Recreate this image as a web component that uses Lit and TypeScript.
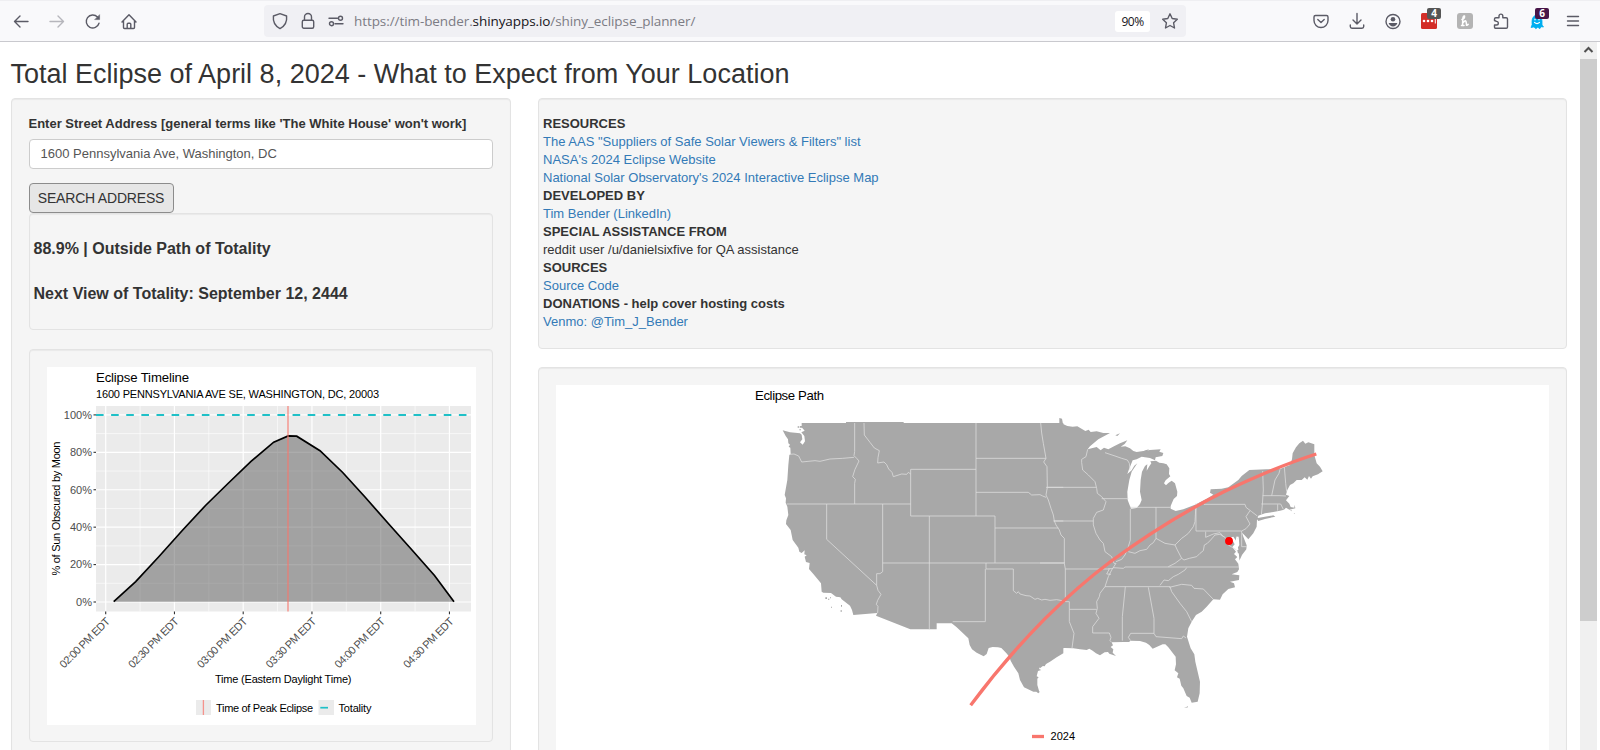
import { LitElement, html, svg, css } from "lit";
import { customElement } from "lit/decorators.js";

@customElement("browser-bar")
class BrowserBar extends LitElement {
  static styles = css`
    :host { display: flex; box-sizing: border-box; height: 42px; align-items: center; background: #f9f9fb; border-top: 1px solid #efeff2; border-bottom: 1px solid #c9c9ce; padding: 0 19px 0 13px; font-family: "Open Sans", "Noto Sans", sans-serif; }
    svg { display: block; overflow: visible; fill: none; stroke: #5b5b66; stroke-width: 1.4; stroke-linecap: round; stroke-linejoin: round; }
    .nav { display: flex; gap: 20px; width: 251px; }
    .dim { opacity: .42; }
    .url { display: flex; align-items: center; box-sizing: border-box; width: 922px; height: 32px; border-radius: 4px; background: #f0f0f4; padding: 0 8px; }
    .marks { display: flex; gap: 12px; margin-right: 10px; }
    .addr { flex: 1; font-size: 13.5px; line-height: 20px; color: #7c7c84; white-space: nowrap; letter-spacing: -.08px; }
    .addr b { font-weight: 400; color: #15141a; }
    .zoom { width: 35px; height: 21px; line-height: 21px; text-align: center; font-size: 12px; letter-spacing: -.5px; color: #15141a; background: #fff; border-radius: 3px; margin-right: 12px; }
    .tools { display: flex; gap: 20px; margin-left: auto; }
    .item { position: relative; width: 16px; height: 16px; }
    .badge { position: absolute; left: 6px; top: -13px; width: 14px; height: 11px; border-radius: 2px; color: #fff; font-size: 10px; line-height: 11px; font-weight: 700; text-align: center; background: #555; }
    .plum { background: #471548; }
  `;
  icon(d: unknown) { return html`<svg width="16" height="16" viewBox="0 0 16 16">${d}</svg>`; }
  render() {
    return html`
      <div class="nav">
        ${this.icon(svg`<path d="M15 8.5H1.5M7 3 1.5 8.5 7 14"/>`)}
        <span class="dim">${this.icon(svg`<path d="M1 8.5h13.500M9 3l5.500 5.500L9 14"/>`)}</span>
        ${this.icon(svg`<path d="M14 10.200A6.500 6.500 0 1 1 12.500 4"/><path d="M14.600 2v4.600H10z" fill="#5b5b66" stroke-width=".5"/>`)}
        ${this.icon(svg`<path d="M1 9 8 1.700 15 9M2.500 8v6.500q0 1 1 1h9q1 0 1-1V8M6.200 15.200v-4q0-1 1-1h1.600q1 0 1 1v4"/>`)}
      </div>
      <div class="url">
        <div class="marks">
          ${this.icon(svg`<path d="M8 .7 14.600 3c.6 5.500-1.600 10-6.600 12.600C3 13 .8 8.500 1.400 3z"/>`)}
          ${this.icon(svg`<rect x="2.300" y="7.200" width="11.400" height="8" rx="1.500"/><path d="M4.500 7V4a3.500 3.500 0 0 1 7 0v3"/>`)}
          ${this.icon(svg`<path d="M1 5.300h8.500M7 10.700h8"/><circle cx="12.500" cy="5.300" r="2"/><circle cx="3.500" cy="10.700" r="2"/>`)}
        </div>
        <div class="addr">https://tim-bender.<b>shinyapps.io</b>/shiny_eclipse_planner/</div>
        <div class="zoom">90%</div>
        ${this.icon(svg`<path d="m8 .8 2.200 4.700 5.100.7-3.700 3.600.9 5.200L8 12.500 3.500 15l.9-5.200L.7 6.200l5.100-.7z"/>`)}
      </div>
      <div class="tools">
        ${this.icon(svg`<path d="M2.500 2.500h11q1.500 0 1.500 1.500v3.500a7 7 0 0 1-14 0V4q0-1.500 1.500-1.500zM4.800 6.500 8 9.500l3.200-3"/>`)}
        ${this.icon(svg`<path d="M8 .5v10.500M4 7l4 4 4-4M1.300 12v1.500q0 1.700 1.700 1.700h10q1.700 0 1.700-1.700V12"/>`)}
        ${this.icon(svg`<circle cx="8" cy="8.500" r="7"/><circle cx="8" cy="6.300" r="2.300" fill="#5b5b66" stroke="none"/><path d="M3.600 10h8.800q-1.200 3.400-4.400 3.400T3.600 10z" fill="#5b5b66" stroke="none"/>`)}
        <div class="item">${this.icon(svg`<rect x="0" y="0" width="16" height="16" rx="1.500" fill="#d32d27" stroke="none"/><g fill="#fff" stroke="none"><circle cx="3" cy="8" r="1.300"/><circle cx="7" cy="8" r="1.300"/><circle cx="11" cy="8" r="1.300"/><path d="M13.800 5.500h1v5h-1z"/></g>`)}<span class="badge" style="top:-5px">4</span></div>
        ${this.icon(svg`<rect width="16" height="16" rx="3" fill="#b4b4b4" stroke="none"/><path d="M5 6.500Q8 5.500 7.500 3q-1.500-.5-1.700 3L5.500 12.500M5.800 10Q8.500 6.500 9 8.500T9.500 12.300q.8.300 1.700-1M4.500 12.500H7" stroke="#fff" stroke-width="1.500"/>`)}
        ${this.icon(svg`<path d="M1.500 7.500V6q0-1.300 1.300-1.300H6V3a1.900 1.900 0 0 1 3.800 0v1.700h3.400q1.300 0 1.300 1.300v8q0 1.300-1.300 1.300H2.800q-1.300 0-1.300-1.300v-2h2a1.800 1.800 0 0 0 0-3.600z"/>`)}
        <div class="item">${this.icon(svg`<path d="M3 8a5 6 0 0 1 10 0v4l1.500 2-2.500-.3-1.200 2-2-1.500-2 1.500-1.800-1.800-3 .6L3 12z" fill="#00aef0" stroke="#00aef0" stroke-width=".8"/><path d="M5.500 9.300q2.500 2.500 5 0M6 6v.8M10 6v.8" stroke="#fff" stroke-width="1.200"/>`)}<span class="badge plum" style="top:-5px">6</span></div>
        ${this.icon(svg`<path d="M2.500 3.500h11M2.500 8h11M2.500 12.500h11"/>`)}
      </div>`;
  }
}

const FONT = "Liberation Sans";

@customElement("timeline-chart")
class TimelineChart extends LitElement {
  static styles = css`
    :host { display: block; }
    svg { display: block; font-family: "Liberation Sans", Arial, sans-serif; background: #fff; }
    .tick { fill: #4d4d4d; }
  `;
  render() {
    const ys = [0, 20, 40, 60, 80, 100];
    const y = (v: number) => 601 - v * 1.871;
    const x = (i: number) => 104.7 + i * 68.75;
    const labels = ["02:00", "02:30", "03:00", "03:30", "04:00", "04:30"];
    const curve = "M113 601 135 581 158.500 555 182 528.500 205 502.500 228 477 250 460.500V460.500";
    const line = "M112.700 600.700 135.500 580 158.500 553.500 182 526 205 500 227.500 483 250 460 273 441 287.500 435.200 295.500 435.500 319 450";
    const pts = "112.700,600.700 135,580.300 158,555 182,528.500 205,502.500 228,485 250,460.300 272.700,441.200 287.200,434.900 295.700,435.200 319,449.700 341.700,471.500 364,496 388,524 411,549.500 433.500,574.500 453,600.700";
    const shape = "112.700,600.700 134.700,580.600 158,554.500 181.500,529 204.500,504 227.500,483.500 250,460.300 272.700,441.200 287.200,434.900 295.700,435.200 319,449.700 341.700,471.500 364,496 388,523.300 411,549 433.500,574.500 453,600.700";
    void curve; void line; void pts;
    return html`<svg width="429" height="358" viewBox="46 366 429 358">
      <rect x="95" y="405" width="375" height="205.500" fill="#ebebeb"/>
      <g stroke="#fff">
        ${[10, 30, 50, 70, 90].map(v => svg`<path d="M95 ${y(v)}H470" stroke-width=".6"/>`)}
        ${[0, 1, 2, 3, 4].map(i => svg`<path d="M${x(i + .5)} 405V610.500" stroke-width=".6"/>`)}
        ${ys.map(v => svg`<path d="M95 ${y(v)}H470" stroke-width="1.200"/>`)}
        ${labels.map((_, i) => svg`<path d="M${x(i)} 405V610.500" stroke-width="1.200"/>`)}
      </g>
      <polygon points=${shape.replace("158,554.500 181.500,529 204.500,504 227.500,483.500", "158,555.500 181.500,529.300 204.500,504.500 227.500,482")} fill="#595959" fill-opacity=".5"/>
      <polyline points=${shape.replace("158,554.500 181.500,529 204.500,504 227.500,483.500", "158,555.500 181.500,529.300 204.500,504.500 227.500,482")} fill="none" stroke="#000" stroke-width="1.700"/>
      <path d="M95 413.900H467" stroke="#1fc0c7" stroke-width="2" stroke-dasharray="7.600 7.520"/>
      <path d="M287 405V610.500" stroke="#f8766d" stroke-opacity=".6" stroke-width="1.800"/>
      <g stroke="#333" stroke-width="1.100">
        ${ys.map(v => svg`<path d="M92.500 ${y(v)}H95"/>`)}
        ${labels.map((_, i) => svg`<path d="M${x(i)} 610.500v2.700"/>`)}
      </g>
      <g class="tick" font-size="11">
        ${ys.map(v => svg`<text x="91" y=${y(v) + 3.900} text-anchor="end">${v}%</text>`)}
        ${labels.map((t, i) => svg`<text transform="translate(${x(i) + 5} ${621}) rotate(-45)" text-anchor="end" textLength="66">${t} PM EDT</text>`)}
      </g>
      <text x="95" y="381" font-size="13.200" textLength="93">Eclipse Timeline</text>
      <text x="95" y="397" font-size="11" textLength="283">1600 PENNSYLVANIA AVE SE, WASHINGTON, DC, 20003</text>
      <text transform="translate(59 574.500) rotate(-90)" font-size="11" textLength="134">% of Sun Obscured by Moon</text>
      <text x="214" y="682" font-size="11" textLength="136.500">Time (Eastern Daylight Time)</text>
      <rect x="195" y="699" width="15" height="15" fill="#ebebeb"/>
      <path d="M202.400 699v15" stroke="#f8766d" stroke-opacity=".75" stroke-width="1.300"/>
      <text x="215" y="711" font-size="11" textLength="97">Time of Peak Eclipse</text>
      <rect x="317.500" y="699" width="15.500" height="15" fill="#ebebeb"/>
      <path d="M319.300 706.700h7.700" stroke="#1fc0c7" stroke-width="1.700"/>
      <text x="337.500" y="711" font-size="11" textLength="33">Totality</text>
    </svg>`;
  }
}

@customElement("path-map")
class PathMap extends LitElement {
  static styles = css`
    :host { display: block; }
    svg { display: block; font-family: "Liberation Sans", Arial, sans-serif; background: #fff; }
  `;
  render() {
    // Map geometry is stored at three units per pixel.
    return html`<svg width="993" height="400" viewBox="556 385 993 400">
      <text x="755" y="400" font-size="13.200" textLength="69">Eclipse Path</text>
      <g transform="translate(770 400) scale(.33333)">
        <g fill="#a8a8a8">
          <path d="M38 91 60 97 90 100 95 104 97 118 90 127 98 134 105 124 103 108 94 97 104 92 95 82V69H228V66H401V69H880V760L860 772 840 785 828 792 824 799 812 797 807 807 814 810 804 813 800 829 806 832 802 836 802 855 807 872 809 876 805 880 799 875 790 875 762 862 750 840 745 820 732 800 722 782 718 770 708 758 694 744 684 742 668 741 656 744 650 762 641 769 620 758 606 748 599 735 595 715 560 682 545 670H500V688H421L318 647 322 639 250 645 246 630 240 617 215 598 211 592 198 590 183 579 160 578 155 575 153 550 130 522 117 507 119 489 108 486 104 470 110 466 103 463 104 451 95 459 88 455 85 443 68 420 62 390 48 372 49 361 55 345 52 320 47 308 48 295 44 285 52 240 55 195 58 165 62 162 61 143 56 140 60 134 55 130 54 118 47 108Z"/>
          <path d="M90 78h6v5h-6zM83 79h5v4h-5zM88 88h5v3h-5zM166 592h5v5h-5zM174 596h4v3h-4zM180 592h3v3h-3zM213 615h3v5h-3zM212 630h3v6h-3zM183 620h3v3h-3z"/>
          <g transform="translate(810 0)">
            <path d="M0 69H58V54L66 56 69 72 82 78 98 80 112 79 136 93 146 89 152 96 170 94 190 99 210 99 175 118 150 139 143 148 170 141 182 151 192 143 205 148 222 139 240 130 262 121 254 132 242 140 256 139 270 145 280 153 290 156 310 153 330 150 362 148 358 155 370 159 367 168 347 172 345 181 330 174 305 170 290 178 278 181 272 196 267 208 262 222 275 211 283 197 292 190 284 202 275 215 268 240 262 275 263 300 270 318 274 326 290 324 300 312 305 300 300 275 302 240 306 215 315 198 322 193 320 212 327 200 334 190 331 184 348 182 358 188 370 190 380 193 388 205 387 222 391 229 377 241 372 250 378 256 385 249 395 242 405 250 412 275 411 288 401 297 392 318 392 326 407 333 430 328 465 314 500 296 520 284 510 278 512 268 545 266 565 262 595 240 605 228 628 210 680 208 720 207 750 195 756 178 758 160 768 142 778 130 789 122 796 131 805 127 823 133V165L830 190 840 200 848 214 834 223 818 229 813 236 807 228 802 239 794 232 785 240 770 240 760 250 750 255 742 270 738 284 748 288 738 301 748 311 752 321 763 323 764 314 766 325 748 329 738 323 732 329 720 332 700 336 675 340 655 347 653 354 700 346 706 350 675 357 655 363 651 358 650 380 640 400 625 418 621 413 610 402 606 398 610 410 620 436 619 448 606 465 598 482 595 465 591 447 598 435 596 409 589 424 580 410 573 412 584 433 577 441 588 455 582 462 592 471 585 478 595 491 597 508 592 516 575 523 598 526 597 540 570 545 582 550 585 562 565 567 548 583 540 599 520 598 500 620 485 635 468 645 455 665 445 685 441 710 452 745 463 763 466 785 480 845 479 880 473 905 455 908 449 893 440 888 430 865 424 857 419 836 411 832 415 820 404 811 408 793 407 770 400 761 385 742 376 733 368 733 338 746 328 735 318 728 300 723 272 722 267 726 250 726 215 727 219 736 212 741 220 748 218 758 228 768 208 761 204 756 194 757 180 766 168 760 158 752 148 746 140 750 120 748 100 745 75 744 65 745 60 755 40 772 20 789 0 805Z"/>
            <path d="M226 106l14-6-8 8zM312 152l15-4-6 6zM432 924l12-5v3zM750 331h5v3zM761 339h3v3z"/>
          </g>
        </g>
        <g fill="none" stroke="#dedede" stroke-width="2.300" stroke-linejoin="round">
          <path d="M254 69V155l-2 12 8 8 7 8-12 25-7 22 8 8-2 12V312M60 163l12-1 14 6 9 18 40-4 15 2 30-7 38-2 34-3M50 312H422M282 69 283 105 300 127 313 144 328 152 324 173 323 189 342 186 350 194 356 207 366 217 370 230 395 222 410 223 415 217 422 222M422 208V348M422 208H618M618 69V348M422 348H675M618 175H828M618 277H775l10 8 25-1 8 4 10 4M812 69 815 99 820 130 828 175 821 186 831 200 832 262 828 285 835 300 843 325 850 345 853 363 858 375 868 390M832 262H880M852 363H880M675 348V489M675 384H865M338 312V515l-8 6-10 0 0 35 4 15 9 12-10 18-4 12 5 6-1 20M338 489H884M478 348V688M170 312V418L320 556M648 489V507H730V572L740 580 745 575 750 582 768 587 780 588 795 598 803 595 815 600 825 598 840 601 860 599 888 604M646 507V665H548"/>
          <path transform="translate(810 0)" d="M18 262H168M143 148 138 170 125 178V188L128 210 145 225 165 245 170 265 172 280 185 290 198 305 190 330 170 337 160 355 160 375 168 400 180 420 190 430 195 455 215 470 222 490 228 490 215 510 205 530 195 560 180 580 178 590 170 605 172 625 168 640 177 655 158 680 158 699H208L213 712 210 722 215 727M40 363H160M185 296H265M195 158 225 168 245 175 262 180 268 190 270 210M271 326V420L265 440 255 465 245 478 228 485M272 322H392M348 322V415L340 428 330 435 320 448 300 452 285 460 265 455M348 415 375 430 405 435 425 415 435 408 445 400 460 380 465 365 468 310M58 390 63 405 73 415V490L76 507V605H88V628H170M0 489H74M76 507H208L200 522 213 523M88 628V665L102 700 96 745M205 506H218L220 503 250 505 255 501H596M195 560H390M256 560 247 650V722M325 562 342 655V700M272 722 265 712 272 700H342L348 710 425 716 430 708 438 714M390 560 395 575 420 610 440 635 455 665M388 562 425 553 455 556 462 565 490 567 520 598M360 556 372 540 385 542 400 530 415 523 435 510 440 503M385 500 405 490 425 475 412 450 405 435M425 475 432 480 448 475 470 470 480 460 490 452 493 435 502 430 512 420 525 405 540 403 555 412 565 435 590 450M468 316V393H605M497 395V412L520 402 540 398 550 410M468 314 490 308 492 313H615L618 322 635 335 652 348M630 332 618 350 630 372 618 386 605 393V440H620M668 213 670 270 667 315 664 345M668 287H720L738 288M664 312H722L730 328M713 313V332M720 208 717 220 705 240 695 287M733 200 737 250 740 275"/>
        </g>
        <g transform="translate(810 0)">
          <path d="M593 450 588 430 592 410M596 485 594 460" fill="none" stroke="#fff" stroke-width="5"/>
        </g>
        <path d="M602 916C660 838 745 737 825 656C890 592 955 535 1020 486C1110 420 1230 341 1360 276C1440 238 1540 193 1639 162" fill="none" stroke="#f8766d" stroke-width="10"/>
        <circle cx="1377" cy="423" r="11.800" fill="#f00"/>
      </g>
      <path d="M1032 736.500h12" stroke="#f8766d" stroke-width="3.300"/>
      <text x="1050.500" y="740" font-size="11" textLength="24.500">2024</text>
    </svg>`;
  }
}

@customElement("app-root")
class AppRoot extends LitElement {
  static styles = css`
    :host { display: block; width: 1600px; height: 750px; overflow: hidden; background: #fff; font-family: "Liberation Sans", Arial, sans-serif; font-size: 13px; line-height: 18px; color: #333; }
    .frame { display: flex; width: 1597px; height: 708px; overflow: hidden; }
    .page { flex: 1; padding: 0 13px 0 10.5px; }
    h1 { margin: 18px 0 9px; font-size: 27px; line-height: 29px; font-weight: 400; white-space: nowrap; }
    .cols { display: flex; gap: 27px; align-items: flex-start; }
    .well { box-sizing: border-box; background: #f5f5f5; border: 1px solid #e3e3e3; border-radius: 4px; box-shadow: inset 0 1px 1px rgba(0,0,0,.05); }
    .left { width: 500.500px; height: 720px; padding: 16px 17px; }
    .right { width: 1029px; display: flex; flex-direction: column; gap: 18px; }
    .label { display: block; font-weight: 700; height: 24px; }
    .field { display: flex; align-items: center; box-sizing: border-box; height: 30px; border: 1px solid #ccc; border-radius: 4px; background: #fff; padding: 0 11px; color: #555; }
    .search { display: block; box-sizing: border-box; width: 145px; height: 30px; margin: 14px 0 0; padding: 0; border: 1px solid #8c8c8c; border-radius: 4px; background: #e6e6e6; color: #333; font: 14px "Liberation Sans", Arial, sans-serif; letter-spacing: -.2px; }
    .result { height: 117px; padding: 25px 4px 0; }
    .result p { margin: 0 0 25px; font-size: 16px; line-height: 20px; font-weight: 700; }
    .chart { margin-top: 19px; height: 393px; padding: 17px; }
    .links { height: 251px; padding: 16px 4px 0; }
    .links div { white-space: nowrap; }
    .links a { color: #337ab7; text-decoration: none; }
    .map { height: 420px; padding: 17px; }
    .scroll { width: 17px; background: #f0f0f0; display: flex; flex-direction: column; }
    .scroll svg { display: block; }
    .thumb { height: 562px; background: #cdcdcd; }
  `;
  render() {
    return html`
      <browser-bar></browser-bar>
      <div class="frame">
        <main class="page">
          <h1>Total Eclipse of April 8, 2024 - What to Expect from Your Location</h1>
          <div class="cols">
            <section class="well left">
              <label class="label">Enter Street Address [general terms like 'The White House' won't work]</label>
              <div class="field">1600 Pennsylvania Ave, Washington, DC</div>
              <button class="search">SEARCH ADDRESS</button>
              <div class="well result"><p>88.9% | Outside Path of Totality</p><p>Next View of Totality: September 12, 2444</p></div>
              <div class="well chart"><timeline-chart></timeline-chart></div>
            </section>
            <section class="right">
              <div class="well links">
                <div><b>RESOURCES</b></div>
                <div><a>The AAS "Suppliers of Safe Solar Viewers &amp; Filters" list</a></div>
                <div><a>NASA's 2024 Eclipse Website</a></div>
                <div><a>National Solar Observatory's 2024 Interactive Eclipse Map</a></div>
                <div><b>DEVELOPED BY</b></div>
                <div><a>Tim Bender (LinkedIn)</a></div>
                <div><b>SPECIAL ASSISTANCE FROM</b></div>
                <div>reddit user /u/danielsixfive for QA assistance</div>
                <div><b>SOURCES</b></div>
                <div><a>Source Code</a></div>
                <div><b>DONATIONS - help cover hosting costs</b></div>
                <div><a>Venmo: @Tim_J_Bender</a></div>
              </div>
              <div class="well map"><path-map></path-map></div>
            </section>
          </div>
        </main>
        <div class="scroll">
          <svg width="17" height="17" viewBox="0 0 17 17"><path d="M4.500 10 8.500 6l4 4" fill="none" stroke="#505050" stroke-width="2"/></svg>
          <div class="thumb"></div>
        </div>
      </div>`;
  }
}
